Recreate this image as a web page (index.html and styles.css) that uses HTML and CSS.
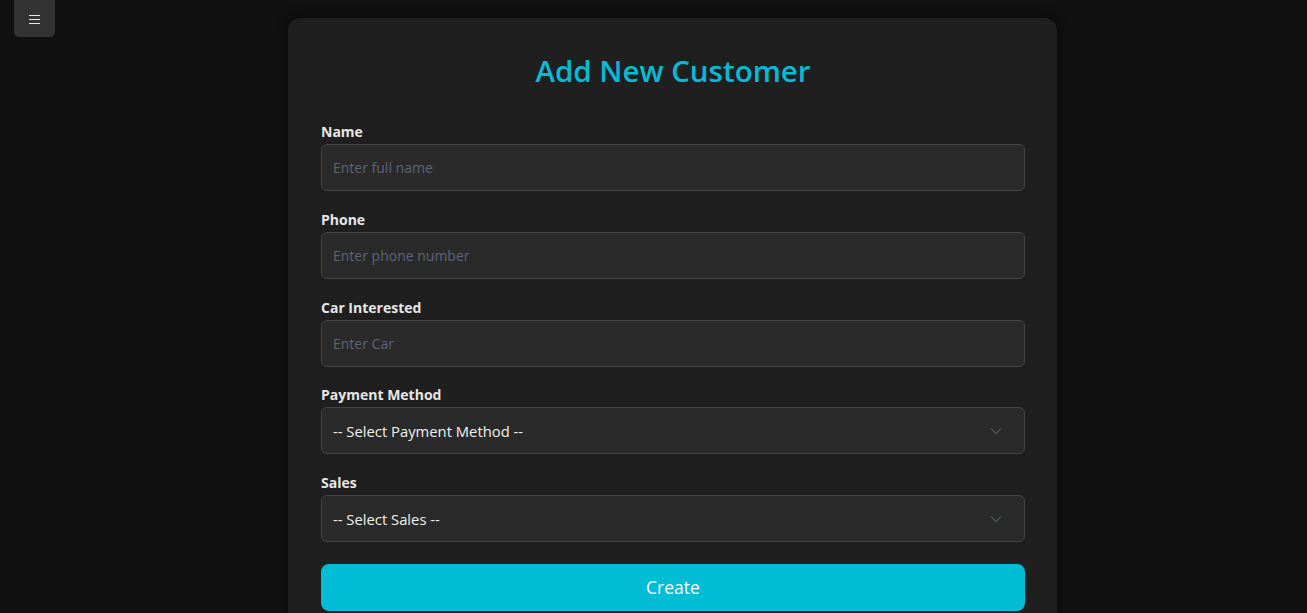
FILE: index.html
```html
<!DOCTYPE html>
<html>
<head>
<meta charset="utf-8">
<link rel="stylesheet" href="styles.css">
</head>
<body>
<button class="menu-btn" aria-label="menu">
  <svg width="12" height="10" viewBox="0 0 12 10"><path d="M0 1.5h11M0 5.5h11M0 9.5h11" stroke="#e6e6e6" stroke-width="1"/></svg>
</button>
<main class="page">
  <form class="card">
    <h1 class="title">Add New Customer</h1>
    <div class="field">
      <label class="label">Name</label>
      <input class="input" type="text" placeholder="Enter full name">
    </div>
    <div class="field">
      <label class="label">Phone</label>
      <input class="input" type="text" placeholder="Enter phone number">
    </div>
    <div class="field">
      <label class="label">Car Interested</label>
      <input class="input" type="text" placeholder="Enter Car">
    </div>
    <div class="field">
      <label class="label">Payment Method</label>
      <div class="select">
        <span>-- Select Payment Method --</span>
        <svg class="chev" width="12" height="8" viewBox="0 0 12 8"><path d="M1 1.5l5 5 5-5" fill="none" stroke="#4a505c" stroke-width="1.4"/></svg>
      </div>
    </div>
    <div class="field">
      <label class="label">Sales</label>
      <div class="select">
        <span>-- Select Sales --</span>
        <svg class="chev" width="12" height="8" viewBox="0 0 12 8"><path d="M1 1.5l5 5 5-5" fill="none" stroke="#4a505c" stroke-width="1.4"/></svg>
      </div>
    </div>
    <button type="button" class="submit">Create</button>
  </form>
</main>
</body>
</html>
```
FILE: styles.css
```css
* { box-sizing: border-box; }
html, body { margin: 0; padding: 0; }
body {
  background: #111111;
  font-family: "Open Sans", "Noto Sans", sans-serif;
  color: #e8e8e8;
  height: 613px;
  overflow: hidden;
}
.menu-btn {
  position: absolute;
  left: 14px;
  top: -6px;
  width: 41px;
  height: 43px;
  padding: 6px 0 0 0;
  border: none;
  border-radius: 5px;
  background: #333333;
  display: flex;
  align-items: center;
  justify-content: center;
}
.page {
  display: flex;
  justify-content: center;
  padding: 18px 0 0 38px;
}
.card {
  width: 769px;
  background: #1f1f1f;
  border-radius: 12px;
  padding: 33px 32px 40px 33px;
  box-shadow: 0 0 14px rgba(0,0,0,0.45);
}
.title {
  margin: 0 0 32px 0;
  text-align: center;
  color: #00bcd4;
  font-size: 29.5px;
  font-weight: 600;
  line-height: 40px;
  letter-spacing: 0;
}
.field {
  display: flex;
  flex-direction: column;
  margin-bottom: 19.75px;
}
.label {
  font-size: 14px;
  font-weight: 700;
  color: #e6e6e6;
  line-height: 18px;
  margin-bottom: 3px;
}
.input, .select {
  width: 704px;
  height: 47px;
  background: #2a2a2a;
  border: 1px solid #454545;
  border-radius: 6px;
  padding: 0 12px 0 11px;
  font-family: inherit;
  font-size: 14px;
  color: #e6e6e6;
  outline: none;
}
.input::placeholder { color: #5b6478; }
.select {
  display: flex;
  align-items: center;
  justify-content: space-between;
  padding-right: 22px;
  font-size: 14.8px;
}
.select span { color: #f0f0f0; }
.submit {
  width: 704px;
  height: 47px;
  margin-top: 2px;
  border: none;
  border-radius: 8px;
  background: #00bcd4;
  color: #ffffff;
  font-family: inherit;
  font-size: 17.5px;
  font-weight: 500;
}
```
